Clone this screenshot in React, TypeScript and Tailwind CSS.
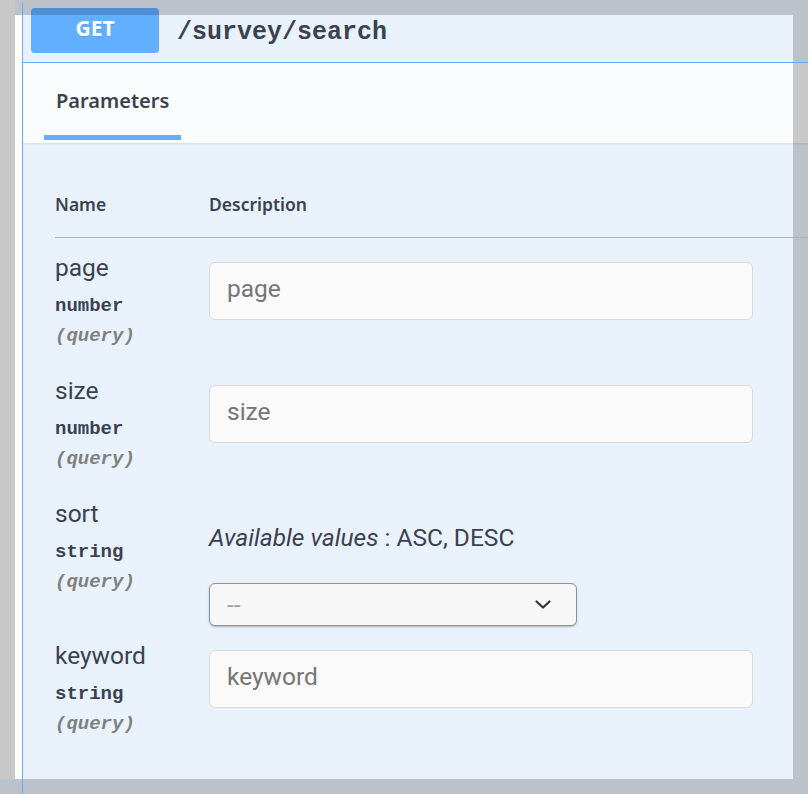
import React from "react";

type Param = { name: string; type: string; kind: "input" | "select" };

const params: Param[] = [
  { name: "page", type: "number", kind: "input" },
  { name: "size", type: "number", kind: "input" },
  { name: "sort", type: "string", kind: "select" },
  { name: "keyword", type: "string", kind: "input" },
];

const narrow = "font-['Roboto',sans-serif]";
const sans = "font-['Noto_Sans',sans-serif]";
const mono = "font-['Liberation_Mono',monospace]";

function Row({ p }: { p: Param }) {
  return (
    <div className="flex pt-[12px]">
      <div className="w-[154px] shrink-0 pb-[13px]">
        <div className={`${narrow} text-[24.5px] leading-[36px] text-[#3b4151]`}>{p.name}</div>
        <div className={`${mono} mt-[8px] text-[19px] font-bold leading-[24px] text-[#3b4151]`}>{p.type}</div>
        <div className={`${mono} mt-[6px] text-[19px] font-bold italic leading-[24px] text-[#808080]`}>(query)</div>
      </div>
      <div className="flex flex-col pt-[12px]">
        {p.kind === "input" ? (
          <input
            placeholder={p.name}
            className={`${narrow} h-[58px] w-[544px] rounded-[6px] border border-[#d9d9d9] bg-[#fafafa] pb-[5px] pl-[17px] text-[24.5px] text-[#3b4151] outline-none placeholder:text-[#757575]`}
          />
        ) : (
          <>
            <p className={`${narrow} mt-[15px] text-[24.5px] leading-[30px] text-[#3b4151]`}>
              <i>Available values</i> : ASC, DESC
            </p>
            <div className="mt-[30px] flex h-[43px] w-[368px] items-center justify-between rounded-[6px] border border-[#8f9297] bg-[#f7f7f7] pl-[17px] pr-[25px] shadow-[0_1px_2px_rgba(0,0,0,0.25)]">
              <span className={`${narrow} text-[24.5px] leading-[30px] text-[#a0a0a0]`}>--</span>
              <svg width="16" height="9" viewBox="0 0 16 9" fill="none">
                <polyline points="1.5,1.5 8,7.5 14.5,1.5" stroke="#333" strokeWidth="2.2" strokeLinecap="round" strokeLinejoin="round" />
              </svg>
            </div>
          </>
        )}
      </div>
    </div>
  );
}

export default function App() {
  return (
    <div className="flex h-[794px] w-[808px] overflow-hidden bg-[#bcc2ca]">
      <div className="flex w-[22px] shrink-0 flex-col">
        <div className="flex h-[779px]">
          <div className="w-[15px] bg-[#c8c8c8]" />
          <div className="flex flex-1 flex-col">
            <div className="h-[15px]" />
            <div className="flex-1 bg-white" />
          </div>
        </div>
      </div>
      <div className="flex min-w-0 flex-1 flex-col rounded-tl-[5px] border-l border-[#61affe]">
        <div className="flex h-[63px] shrink-0 items-start border-b border-[#61affe] pl-[8px] pt-[8px] [background:linear-gradient(to_bottom,#bcc2ca_15px,transparent_15px),linear-gradient(to_left,#bcc2ca_15px,#e9f2fb_15px)]">
          <div className="flex h-[45px] w-[128px] items-center justify-center rounded-[4px] pb-[4px] [background:linear-gradient(to_bottom,#4f8fd6_7px,#61affe_7px)]">
            <span className={`${sans} text-[21px] font-bold text-white [text-shadow:0_1px_0_rgba(0,0,0,0.1)]`}>GET</span>
          </div>
          <span className={`${mono} ml-[18px] mt-[10px] text-[25px] font-bold leading-[30px] text-[#3b4151]`}>/survey/search</span>
        </div>
        <div className="relative z-10 flex h-[80px] shrink-0 pl-[21px] shadow-[0_1px_2px_rgba(0,0,0,0.1)] [background:linear-gradient(to_left,#c8c8c8_15px,#fbfcfe_15px)]">
          <div className="flex flex-col pt-[24px]">
            <span className={`${sans} px-[12px] text-[20px] font-semibold leading-[28px] text-[#3b4151]`}>Parameters</span>
            <div className="mt-[20px] h-[5px] w-full bg-[#61affe]" />
          </div>
        </div>
        <div className="flex flex-1 flex-col pl-[32px] [background:linear-gradient(to_top,#bcc2ca_15px,transparent_15px),linear-gradient(to_left,#bcc2ca_15px,#e9f2fb_15px)]">
          <div className={`${sans} flex h-[95px] shrink-0 items-end border-b border-[#aab1bb] pb-[21px] text-[17.5px] font-semibold leading-[24px] text-[#3b4151]`}>
            <div className="w-[154px]">Name</div>
            <div>Description</div>
          </div>
          {params.map((p) => (
            <Row key={p.name} p={p} />
          ))}
        </div>
      </div>
    </div>
  );
}
